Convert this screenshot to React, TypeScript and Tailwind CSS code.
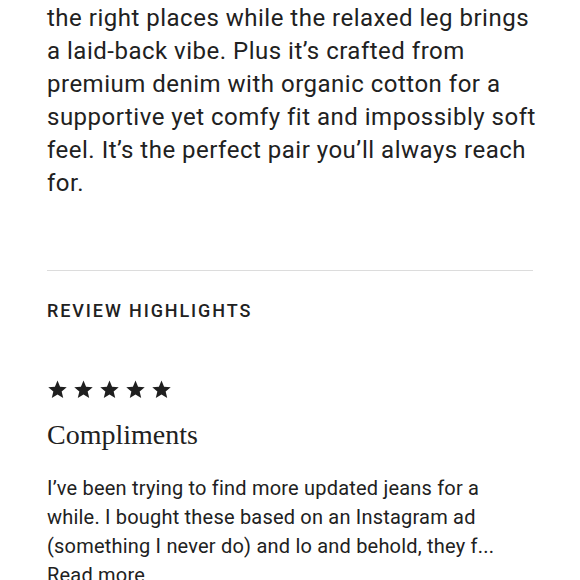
import React from 'react';

const sans = { fontFamily: 'Roboto, "Noto Sans", sans-serif' };

function Star() {
  return (
    <svg viewBox="0 0 24 24" className="w-[21px] h-[21px]" fill="#1f1f1f">
      <path d="M12 1.8l2.95 7.05 7.6.6-5.8 4.95 1.8 7.4L12 17.8l-6.55 4 1.8-7.4-5.8-4.95 7.6-.6z" />
    </svg>
  );
}

export default function App() {
  return (
    <div className="w-[580px] h-[580px] overflow-hidden bg-white text-[#212121]" style={sans}>
      <div className="px-[47px] pt-[2px]">
        {/* product description (top cut off) */}
        <p className="text-[24px] leading-[33px] tracking-[0.5px] whitespace-nowrap">
          the right places while the relaxed leg brings
          <br />a laid-back vibe. Plus it’s crafted from
          <br />premium denim with organic cotton for a
          <br />supportive yet comfy fit and impossibly soft
          <br />feel. It’s the perfect pair you’ll always reach
          <br />for.
        </p>

        <div className="mt-[70px] h-px bg-[#dcdcdc]" />

        {/* ── Review highlights ─────────── */}
        <h2 className="mt-[28px] text-[18px] leading-[24px] font-medium tracking-[1.9px]">REVIEW HIGHLIGHTS</h2>

        <div className="mt-[56px] flex gap-[5px]">
          <Star />
          <Star />
          <Star />
          <Star />
          <Star />
        </div>

        <h3 className="mt-[17px] text-[28px] leading-[36px]" style={{ fontFamily: '"Liberation Serif", "DejaVu Serif", serif' }}>
          Compliments
        </h3>

        <p className="mt-[21px] text-[20px] leading-[29px] tracking-[0.2px] whitespace-nowrap">
          I’ve been trying to find more updated jeans for a
          <br />while. I bought these based on an Instagram ad
          <br />(something I never do) and lo and behold, they f...
          <br />Read more
        </p>
      </div>
    </div>
  );
}
